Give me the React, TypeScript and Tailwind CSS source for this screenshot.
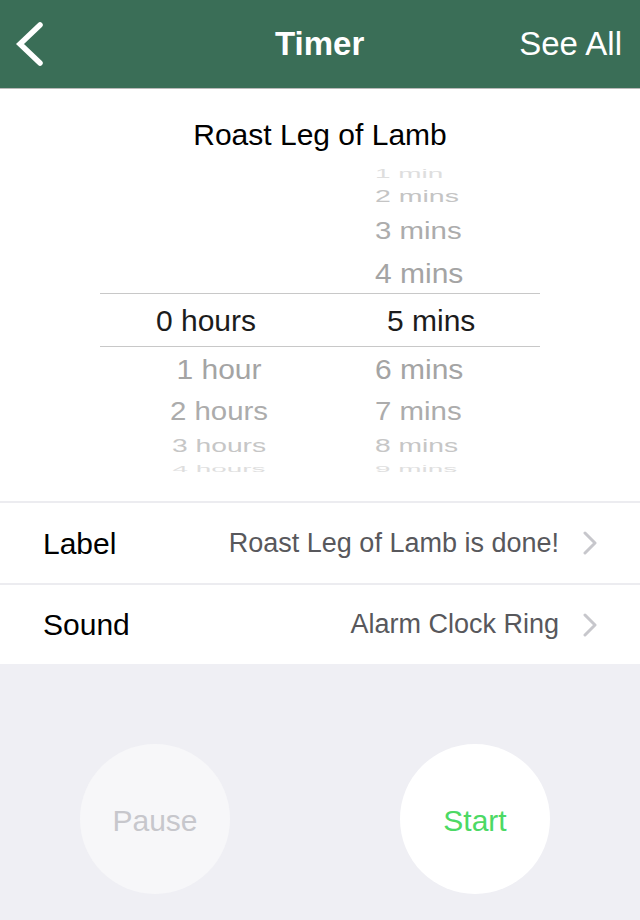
import React from 'react';

type PickerRow = {
  h: string;
  pad: string;
  hours: string;
  mins: string;
  color: string;
  scale: string;
  selected?: boolean;
};

const ROWS: PickerRow[] = [
  { h: 'h-[22px]', pad: 'pt-[6px]', hours: '', mins: '1 min', color: 'text-[#dedede]', scale: 'scale-y-[0.42] scale-x-[0.93]' },
  { h: 'h-[29px]', pad: 'pt-[6px]', hours: '', mins: '2 mins', color: 'text-[#c4c4c4]', scale: 'scale-y-[0.58] scale-x-[0.95]' },
  { h: 'h-[39px]', pad: 'pt-[8px]', hours: '', mins: '3 mins', color: 'text-[#acacac]', scale: 'scale-y-[0.8] scale-x-[0.98]' },
  { h: 'h-[42px]', pad: 'pt-[14px]', hours: '', mins: '4 mins', color: 'text-[#a4a4a4]', scale: 'scale-y-[0.9]' },
  { h: 'h-[54px]', pad: 'pt-[12px]', hours: '0 hours', mins: '5 mins', color: 'text-[#1c1c1c]', scale: '', selected: true },
  { h: 'h-[43px]', pad: 'pt-[12px]', hours: '1 hour', mins: '6 mins', color: 'text-[#a4a4a4]', scale: 'scale-y-[0.9]' },
  { h: 'h-[40px]', pad: 'pt-[14px]', hours: '2 hours', mins: '7 mins', color: 'text-[#acacac]', scale: 'scale-y-[0.84] scale-x-[0.98]' },
  { h: 'h-[28px]', pad: 'pt-[9px]', hours: '3 hours', mins: '8 mins', color: 'text-[#c6c6c6]', scale: 'scale-y-[0.63] scale-x-[0.94]' },
  { h: 'h-[18px]', pad: 'pt-[4px]', hours: '4 hours', mins: '9 mins', color: 'text-[#dedede]', scale: 'scale-y-[0.33] scale-x-[0.93]' },
];

const Chevron = () => (
  <svg width="16" height="24" viewBox="0 0 16 24" className="shrink-0">
    <path d="M3 2 L13 12 L3 22" fill="none" stroke="#c7c7cc" strokeWidth="3" strokeLinecap="round" strokeLinejoin="round" />
  </svg>
);

const SettingRow = ({ label, value, h }: { label: string; value: string; h: string }) => (
  <div className={`flex items-center ${h} border-t-2 border-[#ececf0] pl-[43px] pr-[42px]`}>
    <span className="text-[30px] text-black">{label}</span>
    <span className="ml-auto text-[27px] text-[#58585c] mr-[23px]">{value}</span>
    <Chevron />
  </div>
);

const App: React.FC = () => {
  return (
    <div className="w-[640px] h-[920px] flex flex-col bg-[#efeff4] overflow-hidden font-['Liberation_Sans',Arial,sans-serif]">
      <header className="h-[89px] shrink-0 flex items-center bg-[#3a6e57] border-b border-[#b9b9b9] text-white">
        <svg width="48" height="88" viewBox="0 0 48 88">
          <path d="M40 25 L20 44 L40 63" fill="none" stroke="white" strokeWidth="5.5" strokeLinecap="round" strokeLinejoin="miter" />
        </svg>
        <h1 className="flex-1 text-center text-[33px] font-bold pl-[72px]">Timer</h1>
        <span className="text-[33px] pr-[18px]">See All</span>
      </header>

      <section className="bg-white shrink-0">
        <div className="h-[72px] pt-[28px] text-center text-[30px] leading-[36px] text-black">Roast Leg of Lamb</div>

        <div className="mx-auto w-[440px]">
          {ROWS.map((row) => (
            <div
              key={row.mins}
              className={`grid grid-cols-2 items-center ${row.pad} ${row.h} ${row.selected ? 'border-y border-[#c8c8c8]' : ''}`}
            >
              <div className={row.selected ? 'text-center pr-[8px]' : 'text-center pl-[18px]'}>
                {row.hours && (
                  <span className={`inline-block text-[30px] leading-[14px] whitespace-nowrap ${row.color} ${row.scale}`}>
                    {row.hours}
                  </span>
                )}
              </div>
              <div className={row.selected ? 'pl-[67px]' : 'pl-[55px]'}>
                <span className={`inline-block origin-left text-[30px] leading-[14px] whitespace-nowrap ${row.color} ${row.scale}`}>
                  {row.mins}
                </span>
              </div>
            </div>
          ))}
        </div>

        <div className="h-[25px]" />
        <SettingRow label="Label" value="Roast Leg of Lamb is done!" h="h-[82px]" />
        <SettingRow label="Sound" value="Alarm Clock Ring" h="h-[81px]" />
      </section>

      <div className="flex-1 flex items-start pt-[80px] pl-[80px] gap-[170px]">
        <button className="w-[150px] h-[150px] rounded-full bg-[#f7f7f9] text-[30px] pt-[2px] text-[#c7c7cc]">Pause</button>
        <button className="w-[150px] h-[150px] rounded-full bg-white text-[30px] pt-[2px] text-[#4cd964]">Start</button>
      </div>
    </div>
  );
};

export default App;
